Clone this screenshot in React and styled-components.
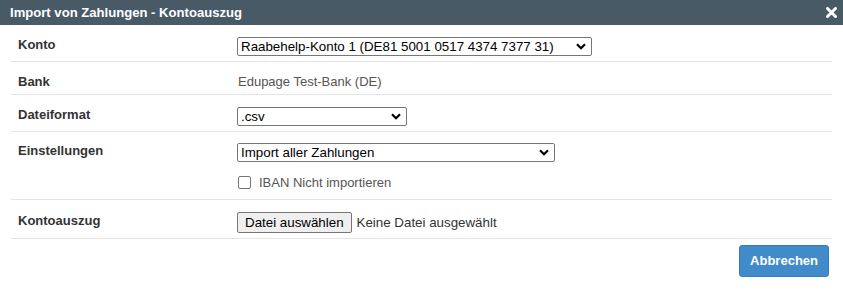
import React from "react";
import styled, { createGlobalStyle } from "styled-components";

const GlobalStyle = createGlobalStyle`
  html, body { margin: 0; padding: 0; background: #fff; }
  body { font-family: "Liberation Sans", Arial, sans-serif; font-size: 13px; color: #333; }
`;

const Dialog = styled.div`
  width: 843px;
  height: 291px;
  background: #fff;
  display: flex;
  flex-direction: column;
`;

const TitleBar = styled.div`
  height: 25px;
  background: #475a66;
  display: flex;
  align-items: center;
  justify-content: space-between;
  padding: 0 6px 0 10px;
  box-sizing: border-box;
`;

const Title = styled.div`
  color: #fff;
  font-weight: bold;
  font-size: 13.1px;
`;

const Close = styled.button`
  border: 0;
  background: transparent;
  padding: 0;
  width: 11px;
  height: 11px;
  display: flex;
  cursor: pointer;
`;

const Content = styled.div`
  padding: 0 11px;
  display: flex;
  flex-direction: column;
`;

const Row = styled.div`
  display: grid;
  grid-template-columns: 226px 1fr;
  border-bottom: 1px solid #e5e5e5;
  padding: ${(p) => p.$pt || 12}px 0 ${(p) => p.$pb || 5}px;
`;

const Label = styled.div`
  font-weight: bold;
  padding-left: 7px;
  line-height: 15px;
  padding-top: ${(p) => p.$pt || 0}px;
`;

const Value = styled.div`
  display: flex;
  flex-direction: column;
  align-items: flex-start;
  gap: ${(p) => p.$gap || 0}px;
`;

const PlainText = styled.div`
  color: #555;
  line-height: 15px;
  padding-left: 1px;
`;

const SelectWrap = styled.div`
  position: relative;
  width: ${(p) => p.$w}px;
  height: 19px;
`;

const Select = styled.select`
  appearance: none;
  -webkit-appearance: none;
  width: 100%;
  height: 100%;
  box-sizing: border-box;
  border: 1px solid #767676;
  border-radius: 2px;
  background: #fff;
  color: #000;
  font-family: "Liberation Sans", Arial, sans-serif;
  font-size: 13.33px;
  padding: 0 20px 0 3px;
  margin: 0;
  outline: none;
`;

const Chevron = styled.svg`
  position: absolute;
  right: 6px;
  top: 6px;
  pointer-events: none;
`;

const CheckLine = styled.label`
  display: flex;
  align-items: center;
  line-height: 15px;
  color: #555;
  margin-left: 1px;
`;

const CheckBox = styled.span`
  width: 13px;
  height: 13px;
  box-sizing: border-box;
  border: 1px solid #767676;
  border-radius: 2px;
  background: #fff;
  margin-right: 8px;
`;

const FileLine = styled.div`
  display: flex;
  align-items: center;
  gap: 5px;
`;

const FileButton = styled.button`
  height: 21px;
  box-sizing: border-box;
  border: 1px solid #767676;
  border-radius: 2px;
  background: #efefef;
  color: #000;
  font-family: "Liberation Sans", Arial, sans-serif;
  font-size: 13.33px;
  padding: 0 7px;
`;

const FileText = styled.span`
  color: #333;
  font-size: 13.33px;
`;

const Footer = styled.div`
  display: flex;
  justify-content: flex-end;
  padding: 6px 14px 0 0;
`;

const PrimaryButton = styled.button`
  background: #428bca;
  border: 1px solid #357ebd;
  border-radius: 3px;
  color: #fff;
  font-family: "Liberation Sans", Arial, sans-serif;
  font-weight: bold;
  font-size: 13px;
  line-height: 18px;
  padding: 6px 10px;
  cursor: pointer;
`;

function Dropdown({ width, value, options }) {
  return (
    <SelectWrap $w={width}>
      <Select defaultValue={value}>
        {options.map((o) => (
          <option key={o}>{o}</option>
        ))}
      </Select>
      <Chevron width="10" height="7" viewBox="0 0 10 7">
        <path d="M1 1.2 L5 5.2 L9 1.2" fill="none" stroke="#000" strokeWidth="2.2" />
      </Chevron>
    </SelectWrap>
  );
}

export default function App() {
  return (
    <>
      <GlobalStyle />
      <Dialog>
        <TitleBar>
          <Title>Import von Zahlungen - Kontoauszug</Title>
          <Close aria-label="close">
            <svg width="11" height="11" viewBox="0 0 11 11">
              <path d="M1.5 1.5 L9.5 9.5 M9.5 1.5 L1.5 9.5" stroke="#fff" strokeWidth="3" strokeLinecap="round" />
            </svg>
          </Close>
        </TitleBar>
        <Content>
          <Row>
            <Label>Konto</Label>
            <Value>
              <Dropdown
                width={355}
                value="Raabehelp-Konto 1 (DE81 5001 0517 4374 7377 31)"
                options={["Raabehelp-Konto 1 (DE81 5001 0517 4374 7377 31)"]}
              />
            </Value>
          </Row>
          <Row>
            <Label>Bank</Label>
            <Value>
              <PlainText>Edupage Test-Bank (DE)</PlainText>
            </Value>
          </Row>
          <Row>
            <Label>Dateiformat</Label>
            <Value>
              <Dropdown width={170} value=".csv" options={[".csv"]} />
            </Value>
          </Row>
          <Row $pt={11} $pb={9}>
            <Label>Einstellungen</Label>
            <Value $gap={13}>
              <Dropdown width={318} value="Import aller Zahlungen" options={["Import aller Zahlungen"]} />
              <CheckLine>
                <CheckBox />
                IBAN Nicht importieren
              </CheckLine>
            </Value>
          </Row>
          <Row>
            <Label $pt={1}>Kontoauszug</Label>
            <Value>
              <FileLine>
                <FileButton>Datei auswählen</FileButton>
                <FileText>Keine Datei ausgewählt</FileText>
              </FileLine>
            </Value>
          </Row>
        </Content>
        <Footer>
          <PrimaryButton>Abbrechen</PrimaryButton>
        </Footer>
      </Dialog>
    </>
  );
}
